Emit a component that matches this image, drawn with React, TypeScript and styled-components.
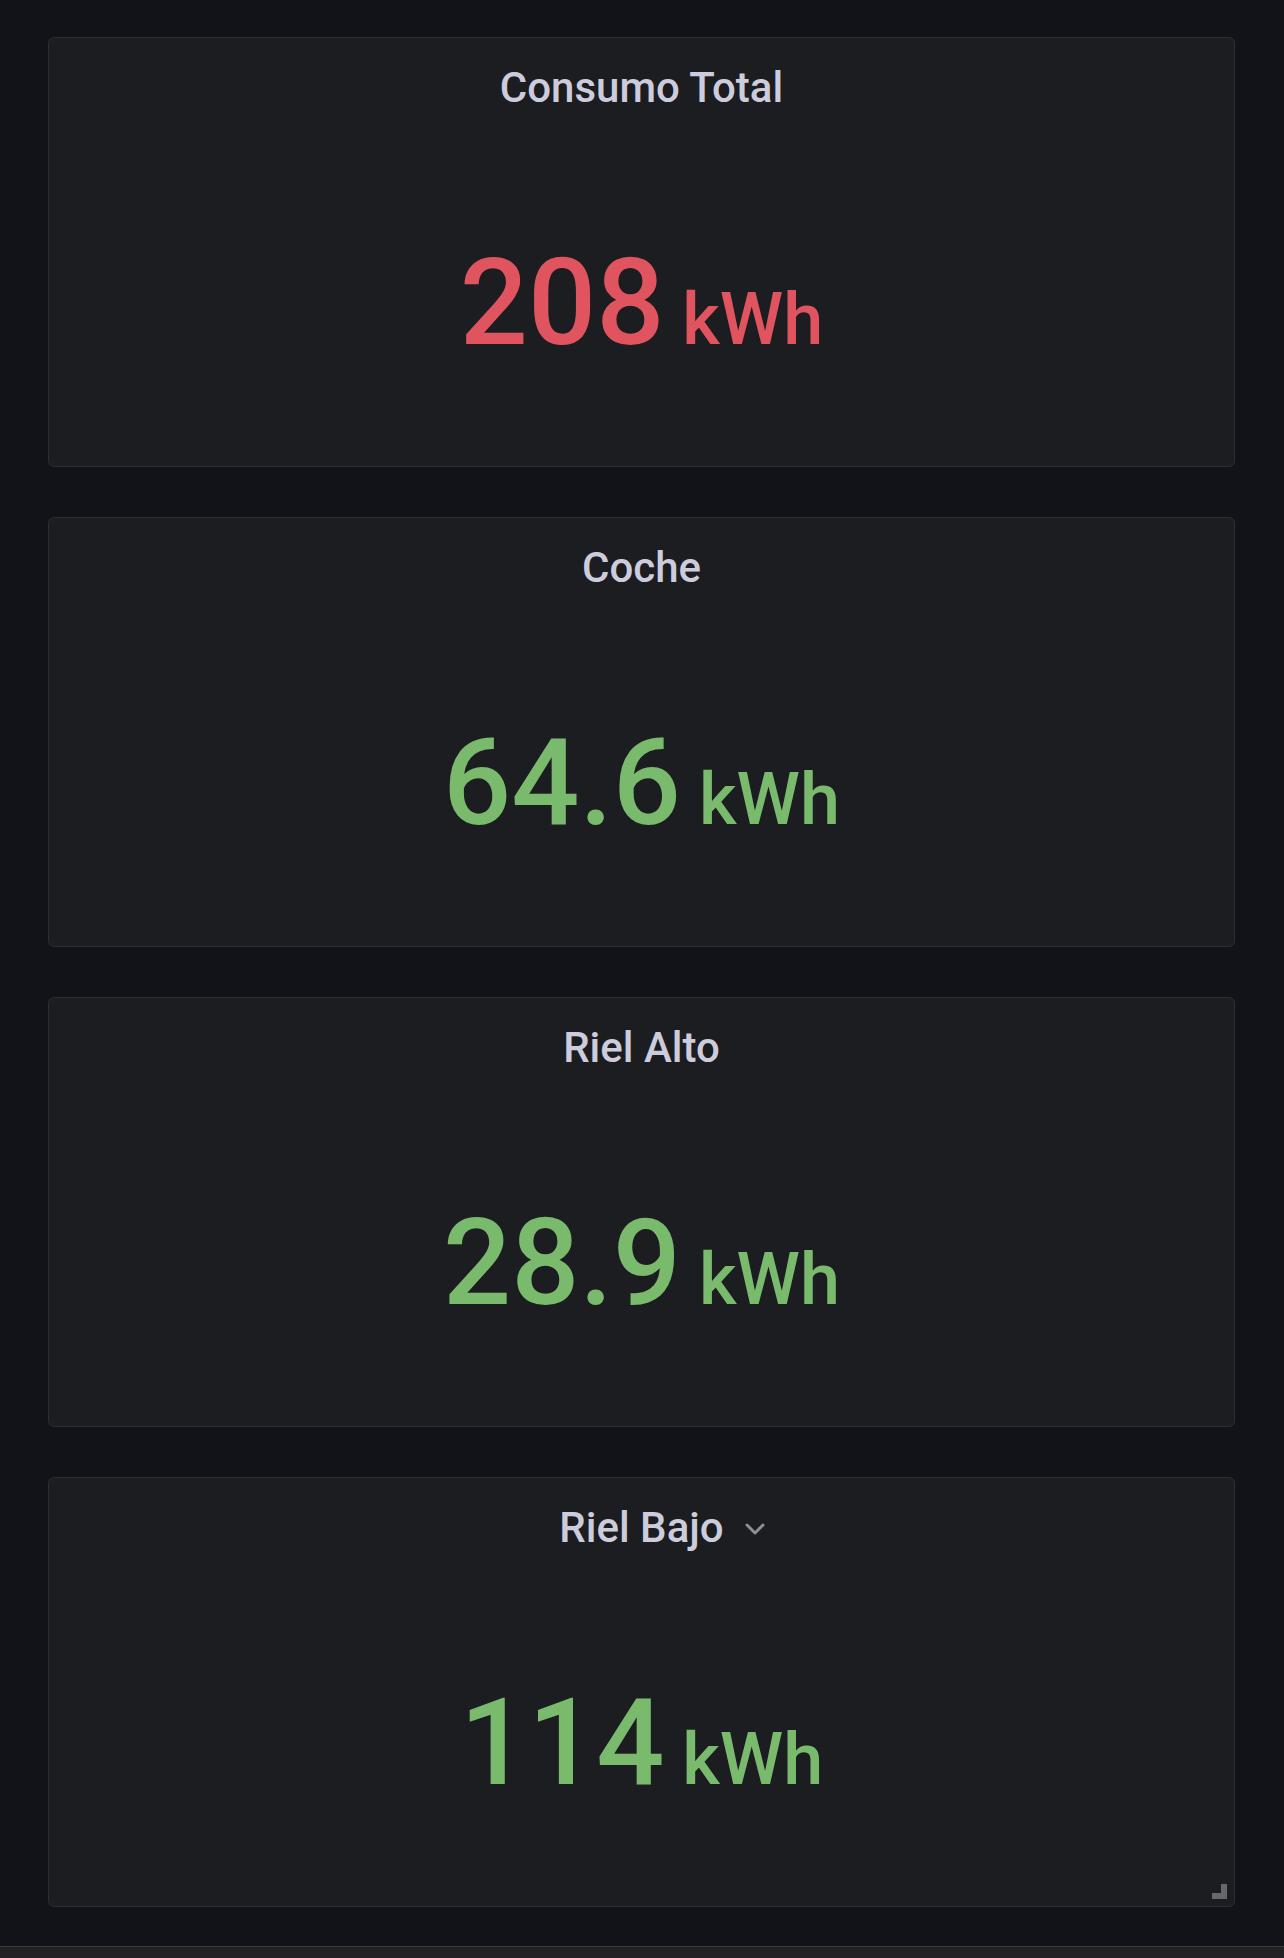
import React from "react";
import styled, { createGlobalStyle } from "styled-components";

const GlobalStyle = createGlobalStyle`
  html, body {
    margin: 0;
    padding: 0;
    background: #121318;
  }
  body {
    font-family: Roboto, "Liberation Sans", Arial, sans-serif;
  }
`;

const Page = styled.div`
  min-height: 1958px;
  display: flex;
  flex-direction: column;
  background: #121318;
`;

const Dashboard = styled.div`
  display: flex;
  flex-direction: column;
  gap: 50px;
  padding: 37px 49px 38px 48px;
`;

const Panel = styled.div`
  position: relative;
  height: 430px;
  box-sizing: border-box;
  display: flex;
  flex-direction: column;
  background: #1c1d21;
  border: 1px solid #2c2d32;
  border-radius: 6px;
`;

const PanelHeader = styled.div`
  display: flex;
  justify-content: center;
  padding-top: 26px;
  height: 48px;
`;

const PanelTitle = styled.span`
  position: relative;
  font-size: 42px;
  line-height: 48px;
  font-weight: 500;
  color: #ccccdc;
`;

const MenuChevron = styled.svg`
  position: absolute;
  left: calc(100% + 21px);
  top: 19px;
  width: 20px;
  height: 12px;
`;

const PanelBody = styled.div`
  flex: 1;
  display: flex;
  align-items: center;
  justify-content: center;
  padding-top: 44px;
`;

const StatValue = styled.div<{ $color: string }>`
  font-size: 120px;
  line-height: 120px;
  font-weight: 500;
  color: ${(p) => p.$color};
  white-space: pre;
`;

const StatUnit = styled.span`
  font-size: 72px;
`;

const ResizeHandle = styled.svg`
  position: absolute;
  right: 7px;
  bottom: 7px;
  width: 15px;
  height: 15px;
`;

const BottomBar = styled.div`
  margin-top: auto;
  height: 11px;
  background: #222225;
  border-top: 1px solid #3a3a3f;
`;

interface IStat {
  title: string;
  value: string;
  unit: string;
  color: string;
  menu?: boolean;
  resizable?: boolean;
}

const RED = "#e0545f";
const GREEN = "#7aba6d";

const stats: IStat[] = [
  { title: "Consumo Total", value: "208", unit: "kWh", color: RED },
  { title: "Coche", value: "64.6", unit: "kWh", color: GREEN },
  { title: "Riel Alto", value: "28.9", unit: "kWh", color: GREEN },
  {
    title: "Riel Bajo",
    value: "114",
    unit: "kWh",
    color: GREEN,
    menu: true,
    resizable: true,
  },
];

const App: React.FC = () => {
  return (
    <>
      <GlobalStyle />
      <Page>
        <Dashboard>
          {stats.map((stat) => (
            <Panel key={stat.title}>
              <PanelHeader>
                <PanelTitle>
                  {stat.title}
                  {stat.menu && (
                    <MenuChevron viewBox="0 0 20 12">
                      <path
                        d="M2 2 L10 10 L18 2"
                        fill="none"
                        stroke="#8e8e9a"
                        strokeWidth="3"
                        strokeLinecap="round"
                        strokeLinejoin="round"
                      />
                    </MenuChevron>
                  )}
                </PanelTitle>
              </PanelHeader>
              <PanelBody>
                <StatValue $color={stat.color}>
                  {stat.value}
                  <StatUnit> {stat.unit}</StatUnit>
                </StatValue>
              </PanelBody>
              {stat.resizable && (
                <ResizeHandle viewBox="0 0 15 15">
                  <path d="M9 0 H15 V15 H0 V9 H9 Z" fill="#66666b" />
                </ResizeHandle>
              )}
            </Panel>
          ))}
        </Dashboard>
        <BottomBar />
      </Page>
    </>
  );
};

export default App;
